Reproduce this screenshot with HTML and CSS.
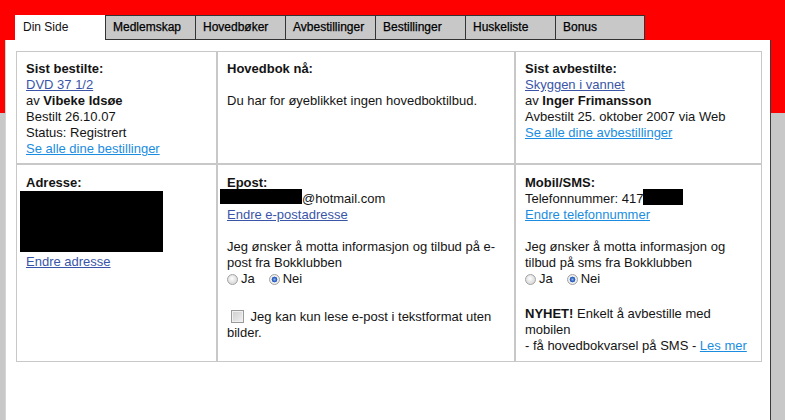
FILE: index.html
```html
<!DOCTYPE html>
<html lang="no">
<head>
<meta charset="utf-8">
<title>Din Side</title>
<link rel="stylesheet" href="styles.css">
</head>
<body>
<div class="page">
  <nav class="tabs">
    <a class="tab active">Din Side</a>
    <a class="tab">Medlemskap</a>
    <a class="tab">Hovedbøker</a>
    <a class="tab">Avbestillinger</a>
    <a class="tab">Bestillinger</a>
    <a class="tab">Huskeliste</a>
    <a class="tab last">Bonus</a>
  </nav>
  <main class="panel">
    <div class="grid">
      <section class="cell top">
        <b>Sist bestilte:</b><br>
        <a class="link seen">DVD 37 1/2</a><br>
        av <b>Vibeke Idsøe</b><br>
        Bestilt 26.10.07<br>
        Status: Registrert<br>
        <a class="link">Se alle dine bestillinger</a>
      </section>
      <section class="cell top">
        <b>Hovedbok nå:</b>
        <p class="gap">Du har for øyeblikket ingen hovedboktilbud.</p>
      </section>
      <section class="cell top">
        <b>Sist avbestilte:</b><br>
        <a class="link seen">Skyggen i vannet</a><br>
        av <b>Inger Frimansson</b><br>
        Avbestilt 25. oktober 2007 via Web<br>
        <a class="link">Se alle dine avbestillinger</a>
      </section>

      <section class="cell bottom">
        <b>Adresse:</b>
        <div class="redact addr"></div>
        <a class="link seen">Endre adresse</a>
      </section>
      <section class="cell bottom">
        <b>Epost:</b>
        <div><span class="redact mail"></span>@hotmail.com</div>
        <a class="link seen">Endre e-postadresse</a>
        <p class="gap">Jeg ønsker å motta informasjon og tilbud på e-<br>post fra Bokklubben</p>
        <div class="choice">
          <label><input type="radio" name="ep"> Ja</label>
          <label><input type="radio" name="ep" checked> Nei</label>
        </div>
        <p class="check"><input type="checkbox"> Jeg kan kun lese e-post i tekstformat uten<br>bilder.</p>
      </section>
      <section class="cell bottom">
        <b>Mobil/SMS:</b>
        <div>Telefonnummer: 417<span class="redact phone"></span></div>
        <a class="link">Endre telefonnummer</a>
        <p class="gap">Jeg ønsker å motta informasjon og<br>tilbud på sms fra Bokklubben</p>
        <div class="choice">
          <label><input type="radio" name="sms"> Ja</label>
          <label><input type="radio" name="sms" checked> Nei</label>
        </div>
        <p class="news"><b>NYHET!</b> Enkelt å avbestille med<br>mobilen<br>- få hovedbokvarsel på SMS - <a class="link">Les mer</a></p>
      </section>
    </div>
  </main>
</div>
</body>
</html>
```

FILE: styles.css
```css
* { box-sizing: border-box; }

html, body {
  margin: 0;
  padding: 0;
  height: 420px;
  overflow: hidden;
}

body {
  background: linear-gradient(to bottom, #fe0000 0, #fe0000 113px, #c8c8c8 113px, #c8c8c8 100%);
  font-family: "Liberation Sans", Arial, sans-serif;
  font-size: 13px;
  line-height: 16px;
  color: #141414;
}

.page {
  height: 420px;
  padding-top: 15px;
  display: flex;
  flex-direction: column;
}

.tabs {
  display: flex;
  margin-left: 15px;
  height: 25px;
}

.tab {
  width: 90px;
  height: 25px;
  padding: 0 0 0 7px;
  font-size: 12px;
  line-height: 23px;
  color: #000;
  background: #c8c8c8;
  border-top: 1px solid #333;
  border-left: 1px solid #333;
  border-bottom: 1px solid #333;
  -webkit-text-stroke: 0.25px #000;
}

.tab.last {
  border-right: 1px solid #333;
}

.tab.active {
  background: #fff;
  border-color: #fff;
  border-left-color: #fff;
  color: #111;
  -webkit-text-stroke: 0;
}

.tab.active + .tab {
  border-left-color: #333;
}

.panel {
  flex: 1;
  margin-left: 5px;
  width: 766px;
  background: #fff;
  border-left: 1px solid #d4d4d4;
  border-right: 1px solid #3a3a3a;
  padding: 11px 0 0 10px;
}

.grid {
  display: grid;
  grid-template-columns: 201px 298px 247px;
  width: 746px;
}

.cell {
  border: 1px solid #c8c8c8;
  padding: 9px 8px 6px 9px;
}

.cell.bottom {
  padding: 10px 8px 7px 9px;
}

.cell p { margin: 0; }

.gap { margin-top: 16px !important; }

.link {
  color: #1b8de0;
  text-decoration: underline;
  cursor: pointer;
}

.link.seen {
  color: #3a55a8;
}

.redact {
  background: #000;
}

.redact.addr {
  width: 143px;
  height: 61px;
  margin-left: -6px;
  margin-bottom: 2px;
}

.redact.mail {
  display: inline-block;
  width: 82px;
  height: 15px;
  margin-left: -7px;
  margin-top: -2px;
  vertical-align: top;
}

.redact.phone {
  display: inline-block;
  width: 40px;
  height: 16px;
  margin-left: -1px;
  margin-top: -2px;
  vertical-align: top;
}

.choice {
  display: flex;
  gap: 14px;
  height: 16px;
  align-items: center;
}

.choice label {
  display: flex;
  align-items: center;
  gap: 3px;
}

input[type="radio"] {
  -webkit-appearance: none;
  appearance: none;
  width: 11px;
  height: 11px;
  margin: 0;
  border-radius: 50%;
  border: 1px solid #a2a2a2;
  background: radial-gradient(circle at 45% 40%, #ffffff 0, #e6e6e6 45%, #cfcfcf 100%);
}

input[type="radio"]:checked {
  background: radial-gradient(circle at 50% 50%, #8fb2e8 0, #2e62c2 2px, #2a5bb8 2.6px, #f4f4f4 3.2px, #dcdcdc 100%);
}

.check {
  margin-top: 22px !important;
}

input[type="checkbox"] {
  -webkit-appearance: none;
  appearance: none;
  width: 13px;
  height: 13px;
  margin: 0 3px 0 4px;
  vertical-align: -2px;
  border: 1px solid #9a9a9a;
  background: linear-gradient(135deg, #cfcfcf 0, #e2e2e2 60%, #f4f4f4 100%);
  box-shadow: inset 0 0 0 1px #f0f0f0;
}

.news {
  margin-top: 19px !important;
}
```
